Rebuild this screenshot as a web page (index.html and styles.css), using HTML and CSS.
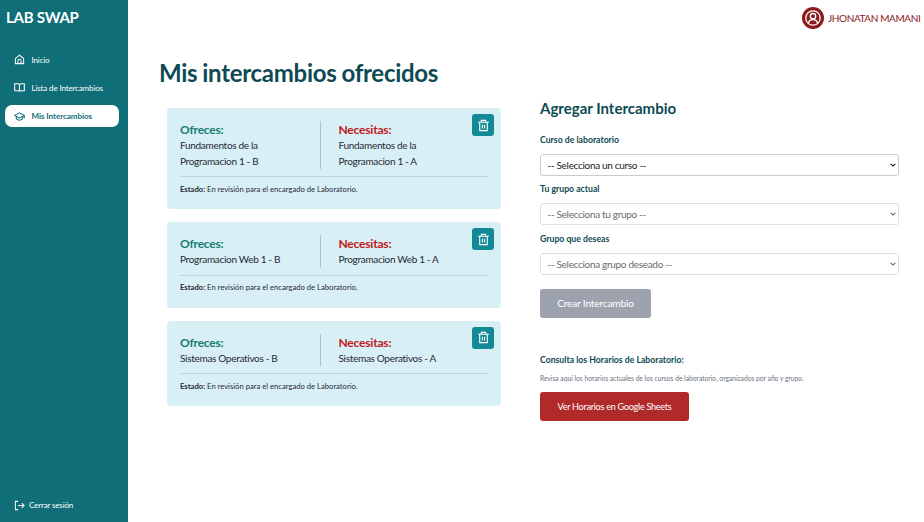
FILE: index.html
```html
<!DOCTYPE html>
<html lang="es">
<head>
<meta charset="utf-8">
<title>Lab Swap</title>
<link rel="stylesheet" href="styles.css">
</head>
<body>
<aside class="sidebar">
  <div class="brand">LAB SWAP</div>
  <nav class="nav">
    <a class="link"><svg class="icon" viewBox="0 0 24 24"><path d="M3 10 12 2.500 21 10v11H3zM8.500 21v-6a3.500 3.500 0 0 1 7 0v6"/></svg><span>Inicio</span></a>
    <a class="link"><svg class="icon" viewBox="0 0 24 24"><path d="M12 6c-1-1.500-2.500-2-4-2H1.500v15H9c1.500 0 3 1 3 2 0-1 1.500-2 3-2h7.500V4H16c-1.500 0-3 .5-4 2zm0 0v15"/></svg><span>Lista de Intercambios</span></a>
    <a class="link active"><svg class="icon" viewBox="0 0 24 24"><path d="M12 4 1.500 9.500 12 15l10.500-5.500zM5 12v4.500c2 2 4 3.500 7 3.500s5-1.500 7-3.500V12M22.500 10v6"/></svg><span>Mis Intercambios</span></a>
  </nav>
  <a class="logout"><svg class="icon" viewBox="0 0 24 24"><path d="M9 3H3v18h6M9 12h13M17 7l5 5-5 5"/></svg><span>Cerrar sesión</span></a>
</aside>
<main class="main">
  <header class="user">
    <svg class="avatar" viewBox="0 0 22 22"><circle cx="11" cy="11" r="11" fill="#8b1a1a"/><g fill="none" stroke="#fff" stroke-width="1.300"><circle cx="11" cy="11" r="7.200"/><circle cx="11" cy="9.200" r="2.700"/><path d="M6.500 16.200c.4-2.400 2.200-3.500 4.500-3.500s4.100 1.100 4.500 3.500"/></g></svg>
    <span>JHONATAN MAMANI</span>
  </header>
  <h1>Mis intercambios ofrecidos</h1>
  <div class="columns">
    <section class="cards">
      <article class="card">
        <div class="pair">
          <div class="offer"><h3>Ofreces:</h3><p>Fundamentos de la<br>Programacion 1 - B</p></div>
          <div class="need"><h3>Necesitas:</h3><p>Fundamentos de la<br>Programacion 1 - A</p></div>
        </div>
        <p class="state"><b>Estado:</b> En revisión para el encargado de Laboratorio.</p>
        <button class="trash"><svg viewBox="0 0 24 24"><path d="M2 6h20M8 6V2.500h8V6M5 6v15.500h14V6M10 10.500v7M14 10.500v7"/></svg></button>
      </article>
      <article class="card">
        <div class="pair">
          <div class="offer"><h3>Ofreces:</h3><p>Programacion Web 1 - B</p></div>
          <div class="need"><h3>Necesitas:</h3><p>Programacion Web 1 - A</p></div>
        </div>
        <p class="state"><b>Estado:</b> En revisión para el encargado de Laboratorio.</p>
        <button class="trash"><svg viewBox="0 0 24 24"><path d="M2 6h20M8 6V2.500h8V6M5 6v15.500h14V6M10 10.500v7M14 10.500v7"/></svg></button>
      </article>
      <article class="card">
        <div class="pair">
          <div class="offer"><h3>Ofreces:</h3><p>Sistemas Operativos - B</p></div>
          <div class="need"><h3>Necesitas:</h3><p>Sistemas Operativos - A</p></div>
        </div>
        <p class="state"><b>Estado:</b> En revisión para el encargado de Laboratorio.</p>
        <button class="trash"><svg viewBox="0 0 24 24"><path d="M2 6h20M8 6V2.500h8V6M5 6v15.500h14V6M10 10.500v7M14 10.500v7"/></svg></button>
      </article>
    </section>
    <section class="form">
      <h2>Agregar Intercambio</h2>
      <label>Curso de laboratorio</label>
      <div class="select enabled"><span>-- Selecciona un curso --</span><svg viewBox="0 0 6 4"><path d="m.6.8 2.400 2.200L5.400.8"/></svg></div>
      <label>Tu grupo actual</label>
      <div class="select"><span>-- Selecciona tu grupo --</span><svg viewBox="0 0 6 4"><path d="m.6.8 2.400 2.200L5.400.8"/></svg></div>
      <label>Grupo que deseas</label>
      <div class="select"><span>-- Selecciona grupo deseado --</span><svg viewBox="0 0 6 4"><path d="m.6.8 2.400 2.200L5.400.8"/></svg></div>
      <button class="btn create">Crear Intercambio</button>
      <h4>Consulta los Horarios de Laboratorio:</h4>
      <p class="hint">Revisa aquí los horarios actuales de los cursos de laboratorio, organizados por año y grupo.</p>
      <button class="btn sheets">Ver Horarios en Google Sheets</button>
    </section>
  </div>
</main>
</body>
</html>
```
FILE: styles.css
```css
* { box-sizing: border-box; margin: 0; padding: 0; }
body { display: flex; height: 522px; overflow: hidden; background: #fff; color: #1f2937; font-family: Lato, "Liberation Sans", sans-serif; white-space: nowrap; font-variant-ligatures: no-common-ligatures; }
button { border: 0; font: inherit; }
.sidebar { width: 128px; height: 522px; padding: 6px 9px 7px 5px; background: #0f6e77; color: #fff; display: flex; flex-direction: column; flex-shrink: 0; }
.brand { font-size: 15px; font-weight: 700; line-height: 22px; padding-left: 1px; letter-spacing: -.25px; }
.nav { margin-top: 20.500px; display: flex; flex-direction: column; gap: 6.400px; }
.link { display: flex; align-items: center; gap: 6.500px; height: 22px; padding-left: 9px; border-radius: 7px; font-size: 8px; letter-spacing: -.14px; }
.active { background: #fff; color: #0f6e77; font-weight: 700; letter-spacing: -.04px; }
.icon { width: 11px; height: 11px; fill: none; stroke: currentColor; stroke-width: 2.200; flex-shrink: 0; }
.logout { margin-top: auto; display: flex; align-items: center; gap: 4px; height: 20px; padding-left: 9px; font-size: 8px; letter-spacing: -.15px; }
.main { flex: 1; display: flex; flex-direction: column; min-width: 0; }
.user { height: 36px; display: flex; align-items: center; gap: 4px; padding-left: 674px; color: #8b1a1a; font-size: 10px; letter-spacing: -.4px; }
.avatar { width: 22px; height: 22px; flex-shrink: 0; }
h1 { margin: 20px 0 0 31px; height: 34px; line-height: 34px; font-size: 24px; font-weight: 700; color: #0d4a52; letter-spacing: -.27px; word-spacing: -.7px; }
.columns { display: flex; align-items: flex-start; margin-top: 8px; padding-left: 39px; gap: 39px; }
.cards { width: 334px; padding-top: 10px; display: flex; flex-direction: column; gap: 13px; }
.card { position: relative; padding: 13px 13px 12.300px; border-radius: 4px; background: #d9eff6; }
.pair { display: flex; }
.offer { width: 141px; border-right: 1px solid #adc2cb; }
.need { padding-left: 17.500px; }
h3 { font-size: 12px; line-height: 17px; font-weight: 700; letter-spacing: -.2px; }
.offer h3 { color: #147d70; }
.need h3 { color: #c01818; }
.card p { font-size: 10px; line-height: 15.700px; letter-spacing: -.3px; word-spacing: -.1px; }
.card .state { margin-top: 7px; padding-top: 4.500px; border-top: 1px solid #bdd2da; font-size: 7.650px; line-height: 15px; letter-spacing: 0; word-spacing: 0; }
.trash { position: absolute; top: 6px; right: 7px; width: 22px; height: 22px; border-radius: 3px; background: #118a96; color: #fff; display: grid; place-items: center; }
.trash svg { width: 13px; height: 13px; fill: none; stroke: currentColor; stroke-width: 2; }
.form { width: 359px; }
h2 { font-size: 15px; line-height: 20px; color: #0d4a52; }
label { display: block; height: 14px; margin-bottom: 7px; font-size: 8.700px; line-height: 14px; font-weight: 700; color: #0d4a52; }
h2 + label { margin-top: 14.500px; }
.select { display: flex; align-items: center; justify-content: space-between; height: 22px; margin-bottom: 6.500px; padding: 0 2px 0 6.500px; border: 1px solid #dcdfe5; border-radius: 3px; font-size: 10px; color: #6b6b6b; letter-spacing: -.3px; word-spacing: -.1px; }
.select.enabled { color: #222; border-color: #c8ccd2; }
.select svg { width: 6px; height: 4px; fill: none; stroke: currentColor; stroke-width: 1.100; }
.btn { display: flex; align-items: center; justify-content: center; height: 28.500px; border-radius: 3px; color: #fff; }
.create { width: 111px; margin-top: 14.500px; background: #9ca3af; font-size: 10.200px; letter-spacing: -.2px; }
.sheets { width: 149px; margin-top: 7px; background: #b02a2a; font-size: 9.100px; letter-spacing: -.28px; }
h4 { margin-top: 35.500px; font-size: 8.700px; line-height: 14px; color: #0d4a52; }
.hint { margin-top: 4px; font-size: 6.680px; line-height: 14px; color: #6b7280; }
```
